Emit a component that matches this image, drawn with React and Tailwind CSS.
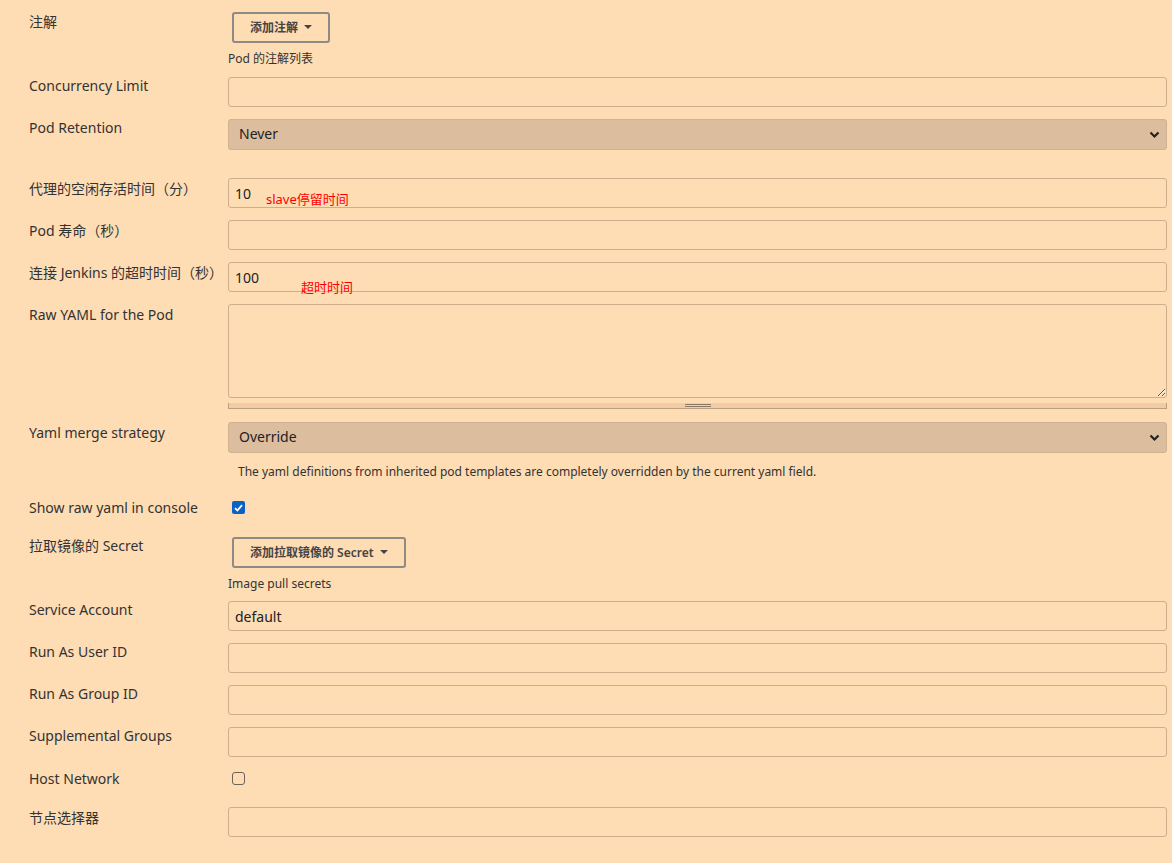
const font = { fontFamily: '"Noto Sans", "Noto Sans CJK SC", sans-serif' };

const Label = ({ children, className = "" }) => (
  <div className={"w-[228px] shrink-0 whitespace-nowrap pl-[29px] text-[14px] leading-5 text-[#333] " + className}>
    {children}
  </div>
);

const Input = ({ value = "" }) => (
  <input
    readOnly
    value={value}
    className="h-[30px] w-full rounded-[3px] border border-[#cdae8d] bg-[#fedcb4] px-[6px] text-[14px] text-[#222] outline-none"
  />
);

const Select = ({ value }) => (
  <div className="relative h-[31px] w-full rounded-[3px] border border-[#cfb292] bg-[#dcbd9e]">
    <div className="px-[10px] pt-[4px] text-[14px] leading-5 text-[#222]">{value}</div>
    <svg className="absolute right-[6px] top-[11px]" width="11" height="8" viewBox="0 0 11 8">
      <path d="M1.5 1.5 L5.5 5.5 L9.5 1.5" fill="none" stroke="#222" strokeWidth="2.2" />
    </svg>
  </div>
);

const DropButton = ({ children }) => (
  <button className="ml-[4px] flex h-[31px] items-center gap-[6px] rounded-[3px] border-2 border-[#8f8a84] px-[16px] text-[12px] font-semibold text-[#444]">
    {children}
    <svg width="8" height="5" viewBox="0 0 8 5">
      <path d="M0 0 L8 0 L4 4 Z" fill="#444" />
    </svg>
  </button>
);

const Row = ({ label, children, className = "", labelClass = "pt-[1px]" }) => (
  <div className={"flex pr-[5px] " + className}>
    <Label className={labelClass}>{label}</Label>
    <div className="relative flex-1">{children}</div>
  </div>
);

const Help = ({ children, className = "" }) => (
  <div className={"text-[12px] leading-4 text-[#333] " + className}>{children}</div>
);

const Check = ({ checked }) =>
  checked ? (
    <div className="ml-[4px] mt-[2px] flex h-[13px] w-[13px] items-center justify-center rounded-[2px] bg-[#0b61c4]">
      <svg width="9" height="8" viewBox="0 0 9 8">
        <path d="M1 4.2 L3.4 6.5 L8 1.2" fill="none" stroke="#fff" strokeWidth="1.8" />
      </svg>
    </div>
  ) : (
    <div className="ml-[4px] mt-[2px] h-[13px] w-[13px] rounded-[3px] border border-[#6b6259] bg-[#fedcb4]" />
  );

export default function App() {
  return (
    <div style={font} className="min-h-[863px] w-[1172px] bg-[#fedcb4] pt-[12px]">
      <Row label="注解" labelClass="pt-[0px]">
        <DropButton>添加注解</DropButton>
        <Help className="mt-[8px]">Pod 的注解列表</Help>
      </Row>

      <Row label="Concurrency Limit" className="mt-[10px]" labelClass="-mt-[1px]">
        <Input />
      </Row>

      <Row label="Pod Retention" className="mt-[12px]" labelClass="-mt-[1px]">
        <Select value="Never" />
      </Row>

      <Row label="代理的空闲存活时间（分）" className="mt-[28px]">
        <Input value="10" />
        <span className="absolute left-[38px] top-[13px] text-[13px] leading-4 text-[#ff0000]">
          slave停留时间
        </span>
      </Row>

      <Row label="Pod 寿命（秒）" className="mt-[12px]">
        <Input />
      </Row>

      <Row label="连接 Jenkins 的超时时间（秒）" className="mt-[12px]">
        <Input value="100" />
        <span className="absolute left-[73px] top-[17px] text-[13px] leading-4 text-[#ff0000]">
          超时时间
        </span>
      </Row>

      <Row label="Raw YAML for the Pod" className="mt-[12px]">
        <textarea
          readOnly
          className="block h-[94px] w-full resize-y rounded-[3px] border border-[#cdae8d] bg-[#fedcb4] outline-none"
        />
        <div className="mt-[5px] flex h-[6px] items-center justify-center border-x border-b border-t-0 border-[#b8a081] bg-[#f3cca4]">
          <div className="flex w-[26px] flex-col gap-[1px]">
            <div className="h-px bg-[#8d7a64]" />
            <div className="h-px bg-[#8d7a64]" />
          </div>
        </div>
      </Row>

      <Row label="Yaml merge strategy" className="mt-[13px]">
        <Select value="Override" />
        <Help className="mt-[11px] pl-[10px]">
          The yaml definitions from inherited pod templates are completely overridden by the current yaml field.
        </Help>
      </Row>

      <Row label="Show raw yaml in console" className="mt-[19px]" labelClass="-mt-[1px]">
        <Check checked />
      </Row>

      <Row label="拉取镜像的 Secret" className="mt-[19px]" labelClass="-mt-[1px]">
        <DropButton>添加拉取镜像的 Secret</DropButton>
        <Help className="mt-[8px]">Image pull secrets</Help>
      </Row>

      <Row label="Service Account" className="mt-[9px]" labelClass="-mt-[1px]">
        <Input value="default" />
      </Row>

      <Row label="Run As User ID" className="mt-[12px]" labelClass="-mt-[1px]">
        <Input />
      </Row>

      <Row label="Run As Group ID" className="mt-[12px]" labelClass="-mt-[1px]">
        <Input />
      </Row>

      <Row label="Supplemental Groups" className="mt-[12px]" labelClass="-mt-[1px]">
        <Input />
      </Row>

      <Row label="Host Network" className="mt-[13px]" labelClass="-mt-[1px]">
        <Check />
      </Row>

      <Row label="节点选择器" className="mt-[18px]">
        <Input />
      </Row>
    </div>
  );
}
